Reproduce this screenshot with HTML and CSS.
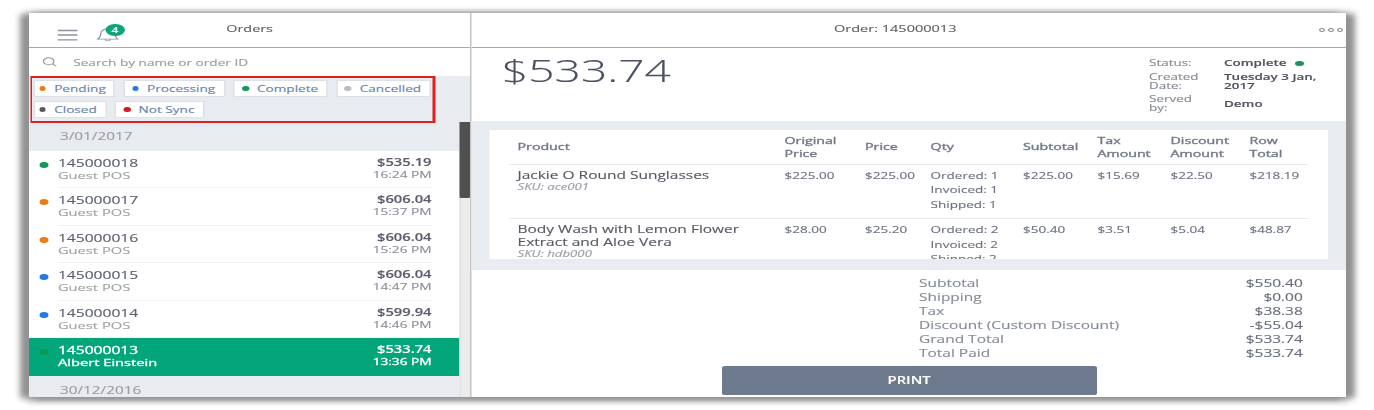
FILE: index.html
```html
<!DOCTYPE html>
<html lang="en">
<head>
<meta charset="utf-8">
<title>Orders</title>
<link rel="stylesheet" href="styles.css">
</head>
<body>
<div class="app">
  <aside class="sidebar">
    <header class="bar bar-left">
      <svg class="menu-icon" viewBox="0 0 14 13"><path d="M0 1.500h13.300M0 6h13.300M0 10.800h13.300"/></svg>
      <span class="bell">
        <svg class="bell-icon" viewBox="0 0 15 15"><path d="M.6 12.200C2.600 10.800 2.600 9.500 2.800 7C3 4 4.700 2 7.500 2S12 4 12.200 7C12.400 9.500 12.600 10.800 14.400 12.200ZM5.700 12.600C6.400 14.200 8.600 14.200 9.300 12.600"/></svg>
        <span class="badge">4</span>
      </span>
      <h1 class="title">Orders</h1>
    </header>
    <div class="search">
      <svg class="search-icon" viewBox="0 0 10 10"><circle cx="4.100" cy="4.300" r="3.500"/><path d="M6.700 6.900L9.200 9.300"/></svg>
      <span>Search by name or order ID</span>
    </div>
    <div class="filters">
      <div class="filter-box">
        <span class="chip first w1"><i class="dot orange"></i>Pending</span>
        <span class="chip w2"><i class="dot blue"></i>Processing</span>
        <span class="chip w3"><i class="dot green"></i>Complete</span>
        <span class="chip w4"><i class="dot silver"></i>Cancelled</span>
        <span class="chip first w5"><i class="dot dark"></i>Closed</span>
        <span class="chip w6"><i class="dot red"></i>Not Sync</span>
      </div>
    </div>
    <div class="list-wrap">
      <div class="list">
        <div class="date">3/01/2017</div>
        <div class="order"><i class="dot green"></i><div class="who"><b>145000018</b><span>Guest POS</span></div><div class="sum"><b>$535.19</b><span>16:24 PM</span></div></div>
        <div class="order"><i class="dot orange"></i><div class="who"><b>145000017</b><span>Guest POS</span></div><div class="sum"><b>$606.04</b><span>15:37 PM</span></div></div>
        <div class="order"><i class="dot orange"></i><div class="who"><b>145000016</b><span>Guest POS</span></div><div class="sum"><b>$606.04</b><span>15:26 PM</span></div></div>
        <div class="order"><i class="dot blue"></i><div class="who"><b>145000015</b><span>Guest POS</span></div><div class="sum"><b>$606.04</b><span>14:47 PM</span></div></div>
        <div class="order"><i class="dot blue"></i><div class="who"><b>145000014</b><span>Guest POS</span></div><div class="sum"><b>$599.94</b><span>14:46 PM</span></div></div>
        <div class="order selected"><i class="dot green"></i><div class="who"><b>145000013</b><span>Albert Einstein</span></div><div class="sum"><b>$533.74</b><span>13:36 PM</span></div></div>
        <div class="date last">30/12/2016</div>
      </div>
      <div class="track"><div class="thumb"></div></div>
    </div>
  </aside>
  <main class="detail">
    <header class="bar bar-right">
      <h2 class="title">Order: 145000013</h2>
      <svg class="more" viewBox="0 0 17 6"><circle cx="2" cy="3" r="1.500"/><circle cx="8" cy="3" r="1.500"/><circle cx="14" cy="3" r="1.500"/></svg>
    </header>
    <section class="summary">
      <div class="grand">$533.74</div>
      <dl class="meta">
        <dt>Status:</dt><dd>Complete<i class="dot green"></i></dd>
        <dt>Created Date:</dt><dd>Tuesday 3 Jan, 2017</dd>
        <dt>Served by:</dt><dd>Demo</dd>
      </dl>
    </section>
    <section class="items">
      <div class="panel">
        <div class="line head"><span>Product</span><span>Original Price</span><span>Price</span><span>Qty</span><span>Subtotal</span><span>Tax Amount</span><span>Discount Amount</span><span>Row Total</span></div>
        <div class="line"><div class="name">Jackie O Round Sunglasses<em>SKU: ace001</em></div><span>$225.00</span><span>$225.00</span><span class="qty">Ordered: 1<br>Invoiced: 1<br>Shipped: 1</span><span>$225.00</span><span>$15.69</span><span>$22.50</span><span>$218.19</span></div>
        <div class="line"><div class="name">Body Wash with Lemon Flower<br>Extract and Aloe Vera<em>SKU: hdb000</em></div><span>$28.00</span><span>$25.20</span><span class="qty">Ordered: 2<br>Invoiced: 2<br>Shipped: 2</span><span>$50.40</span><span>$3.51</span><span>$5.04</span><span>$48.87</span></div>
      </div>
    </section>
    <section class="footer">
      <div class="totals">
        <div><span>Subtotal</span><b>$550.40</b></div>
        <div><span>Shipping</span><b>$0.00</b></div>
        <div><span>Tax</span><b>$38.38</b></div>
        <div><span>Discount (Custom Discount)</span><b>-$55.04</b></div>
        <div><span>Grand Total</span><b>$533.74</b></div>
        <div><span>Total Paid</span><b>$533.74</b></div>
      </div>
      <button class="print">PRINT</button>
    </section>
  </main>
</div>
</body>
</html>
```
FILE: styles.css
```css
* { box-sizing: border-box; }
html { background: #fff; overflow: hidden; }
body {
  margin: 0;
  padding: 13px 0 0 29px;
  height: 410px;
  overflow: hidden;
  font-family: "Open Sans", sans-serif;
  color: #6a7080;
}
/* The whole console is displayed with a wide pixel aspect. */
.app {
  display: flex;
  width: 877.700px;
  height: 384px;
  background: #fff;
  transform: scaleX(1.5);
  transform-origin: 0 0;
  box-shadow: -6px 1px 5px 0 #929292, 6px 1px 5px 0 #929292, 0 2px 6px 1px #8f8f8f;
  -webkit-text-stroke: .12px currentColor;
}
.sidebar {
  display: flex;
  flex-direction: column;
  width: 294.700px;
  height: 384px;
  border-right: 1px solid #c4c4c6;
  overflow: hidden;
}
.detail {
  display: flex;
  flex-direction: column;
  width: 583px;
  height: 384px;
}
.bar {
  display: flex;
  align-items: center;
  flex: none;
  height: 35px;
  border-bottom: 1.500px solid #a9a9a9;
}
.title {
  margin: 0;
  font-size: 9.600px;
  font-weight: 400;
  line-height: 14px;
  color: #5f6066;
  padding-bottom: 2px;
}
.bar-left { padding-left: 19px; }
.bar-left .title { margin-left: 72px; }
.menu-icon {
  width: 14px;
  height: 13px;
  margin-top: 11px;
  fill: none;
  stroke: #8d919b;
  stroke-width: 1.300;
}
.bell { position: relative; width: 15px; height: 15px; margin: 9px 0 0 11.500px; }
.bell-icon { display: block; width: 15px; height: 15px; fill: none; stroke: #8d919b; stroke-width: .8; }
.badge {
  position: absolute;
  left: 6.500px;
  top: -3px;
  width: 12.500px;
  height: 12px;
  border-radius: 50%;
  background: #0aa578;
  color: #fff;
  font-size: 8px;
  font-weight: 600;
  line-height: 12px;
  text-align: center;
}
.search {
  display: flex;
  align-items: center;
  flex: none;
  height: 28px;
  padding-left: 9px;
  font-size: 9.080px;
  color: #999ba0;
}
.search-icon { width: 10px; height: 10px; margin-right: 10.500px; fill: none; stroke: #92959c; stroke-width: .9; }
.filters { position: relative; z-index: 1; flex: none; height: 46px; padding-left: .7px; background: #e8ebef; }
.filter-box {
  display: flex;
  flex-wrap: wrap;
  align-content: flex-start;
  gap: 4px 5.800px;
  width: 270.500px;
  height: 47px;
  padding: 2px 0 0 1px;
  border: 2px solid #de2020;
  border-width: 2px 2px 2px 1.700px;
}
.chip {
  display: flex;
  align-items: center;
  height: 17px;
  padding-left: 4.500px;
  border: 1px solid #dde0e6;
  border-radius: 1px;
  background: #fff;
  color: #6684ad;
  font-size: 9.080px;
  line-height: 15px;
  white-space: nowrap;
}
.chip.first { padding-left: 3.100px; }
.chip .dot { width: 4.600px; height: 5px; margin-right: 5.400px; }
.w1 { width: 54.700px; }
.w2 { width: 67.500px; }
.w3 { width: 62.700px; }
.w4 { width: 62.700px; }
.w5 { width: 49px; }
.w6 { width: 59.300px; }
.dot { flex: none; width: 5px; height: 5px; border-radius: 50%; }
.green { background: #16965a; }
.orange { background: #ec7d16; }
.blue { background: #2378e2; }
.silver { background: #bcbcbe; }
.dark { background: #5a5a5c; }
.red { background: #d21c1c; }
.list-wrap { display: flex; flex: 1; min-height: 0; overflow: hidden; }
.list { width: 287.300px; }
.date {
  height: 28.500px;
  padding: 7px 0 0 20.700px;
  background: #e8ebef;
  color: #9b9da2;
  font-size: 10.200px;
  line-height: 14px;
}
.date.last { height: 30px; padding-top: 7.500px; }
.order {
  display: flex;
  height: 37.500px;
  padding: 0 18.700px 0 7.200px;
}
.order .dot { width: 6px; height: 6px; margin: 11.300px 6.100px 0 0; }
.who, .sum {
  display: flex;
  flex-direction: column;
  padding-top: 5.100px;
  border-bottom: 1px solid #f1f1f3;
}
.who { flex: 1; }
.who b { font-size: 10.400px; font-weight: 400; line-height: 14px; color: #5b606d; }
.who span { font-size: 9.800px; line-height: 12px; color: #a0a1a5; }
.sum { text-align: right; }
.sum b { font-size: 9.800px; font-weight: 600; line-height: 14px; color: #5c5c6d; }
.sum span { font-size: 9.100px; line-height: 10px; color: #8a8e97; }
.selected { background: #03a67a; }
.selected .dot { background: #0a9a55; }
.selected .who, .selected .sum { border-color: transparent; }
.selected b, .selected span { color: #fff; }
.order.selected .who { -webkit-text-stroke: .3px currentColor; }
.order.selected .sum span { -webkit-text-stroke: .3px currentColor; }
.track { width: 6.700px; background: #ececed; border-left: 1px solid #e0e0e0; }
.thumb { width: 6.700px; height: 77px; margin: -1px 0 0 -1px; border-radius: 1px; background: #505050; }

.bar-right { justify-content: space-between; padding: 0 .7px 0 242px; }
.bar-right .title { font-size: 9.680px; }
.more { width: 17px; height: 6px; margin-bottom: 1px; fill: none; stroke: #888c93; stroke-width: .8; }
.summary {
  display: flex;
  justify-content: space-between;
  flex: none;
  height: 73px;
  padding: 0 13px 0 20.700px;
}
.grand { font-size: 30.700px; font-weight: 300; line-height: 45px; color: #4b5061; }
.meta {
  display: grid;
  grid-template-columns: 36px 68px;
  column-gap: 14px;
  align-content: start;
  margin: 0;
  width: 118px;
  padding-top: 11px;
  row-gap: 5px;
  font-size: 8.960px;
  line-height: 8.800px;
  color: #858a94;
}
.meta dd { display: flex; align-items: center; margin: 0; font-weight: 600; color: #4f525f; }
.meta .dot { width: 6px; height: 5.500px; margin-left: 6px; }
.items { flex: none; height: 148.500px; padding: 9px 12px 0; background: #e8ebef; }
.panel { height: 129px; padding: 0 13px; background: #fff; overflow: hidden; }
.line {
  display: grid;
  grid-template-columns: 178px 53.700px 43.700px 61.600px 49.700px 48.700px 52.600px 1fr;
  height: 54.500px;
  padding: 4px 0 0 6px;
  border-bottom: 1px solid #e9eaec;
  font-size: 9px;
  line-height: 14.700px;
  color: #6b7180;
}
.head {
  align-items: center;
  height: 34.500px;
  padding-top: 1.500px;
  font-size: 9.480px;
  line-height: 12.600px;
  color: #727988;
  -webkit-text-stroke: .36px currentColor;
}
.name { font-size: 10.340px; line-height: 13px; color: #555962; }
.name em { display: block; font-size: 8.800px; line-height: 11.800px; color: #9a9da4; }
.footer { padding: 6px 28.500px 0 298.700px; }
.totals { font-size: 10.300px; line-height: 14.100px; color: #858c97; }
.totals div { display: flex; justify-content: space-between; }
.totals b { font-weight: 400; color: #676d79; }
.print {
  display: block;
  width: 249.700px;
  height: 29px;
  margin: 5.500px 0 0 -131.500px;
  padding: 0;
  border: 0;
  border-radius: 2px;
  background: #6d7a8e;
  color: #fff;
  font: 600 9.900px/29px "Open Sans", sans-serif;
}
```
